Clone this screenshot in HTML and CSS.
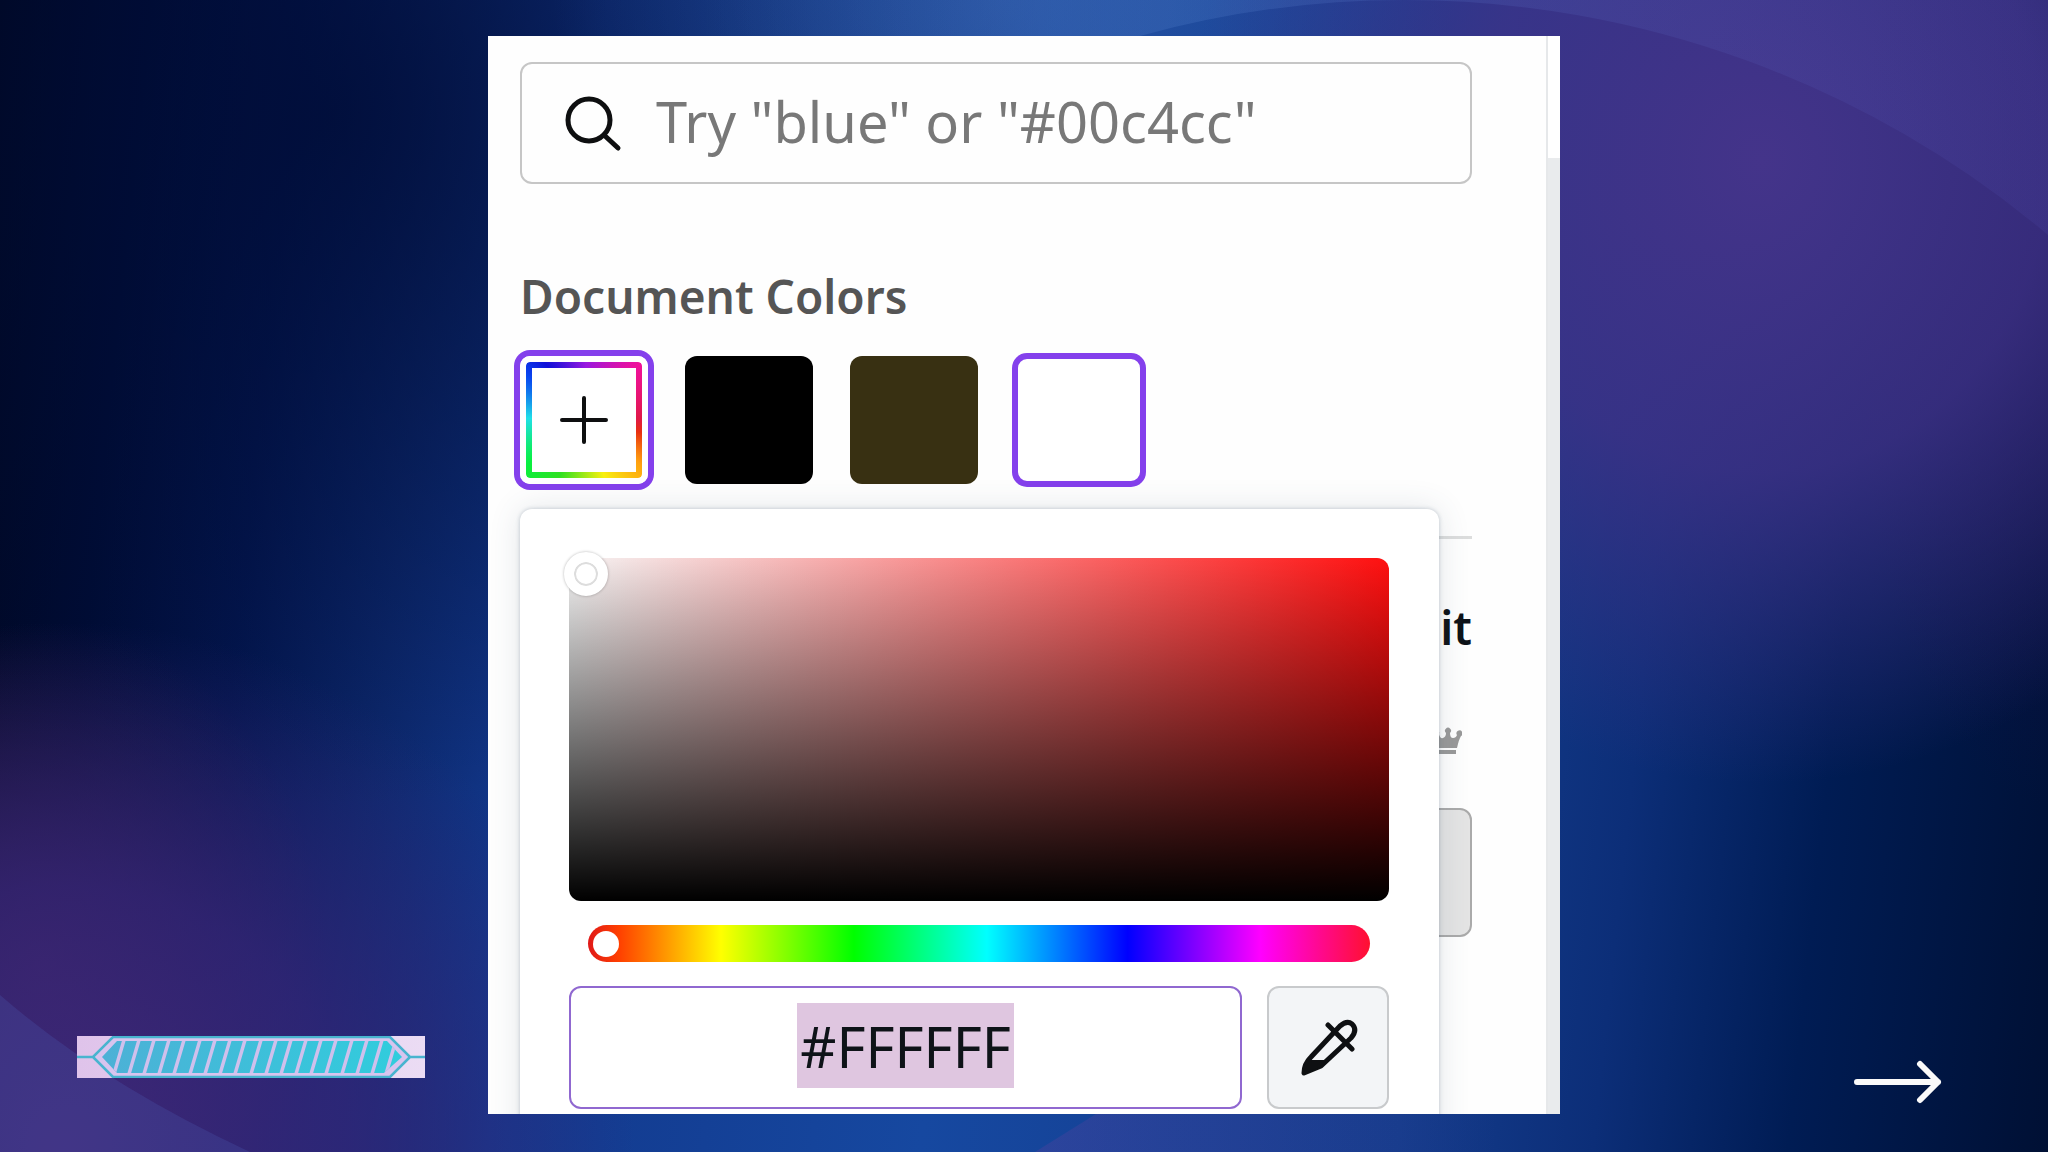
FILE: index.html
```html
<!DOCTYPE html>
<html lang="en">
<head>
<meta charset="utf-8">
<title>Color picker</title>
<link rel="stylesheet" href="styles.css">
</head>
<body>
<svg class="backdrop" viewBox="0 0 2048 1152" preserveAspectRatio="none" aria-hidden="true">
  <defs>
    <linearGradient id="glow" x1="0" x2="1"><stop offset="0" stop-color="#6aa0e0" stop-opacity="0"/><stop offset="0.35" stop-color="#6a98e0" stop-opacity="0.18"/><stop offset="1" stop-color="#5a58c0" stop-opacity="0.12"/></linearGradient>
    <linearGradient id="ember" x1="0" x2="1"><stop offset="0" stop-color="#7040a0" stop-opacity="0.25"/><stop offset="1" stop-color="#7040a0" stop-opacity="0"/></linearGradient>
  </defs>
  <path d="M700 0H2048V235A1000 1000 0 0 0 1404 0Q1270 0 1140 36H700Z" fill="url(#glow)"/>
  <path d="M0 995Q100 1082 250 1152H0Z" fill="#4a58b0" fill-opacity="0.28"/>
  <path d="M1096 1114H1500V1152H1035Z" fill="url(#ember)"/>
</svg>
<main class="slide">
  <div class="side side-left">
    <svg class="meter" viewBox="0 0 348 42" aria-hidden="true">
      <defs>
        <linearGradient id="plate" x1="0" x2="1"><stop offset="0" stop-color="#dfc3ea"/><stop offset="1" stop-color="#ebdcf4"/></linearGradient>
        <linearGradient id="fill" x1="0" x2="1"><stop offset="0" stop-color="#4db0d6"/><stop offset="1" stop-color="#30cddd"/></linearGradient>
        <clipPath id="hex"><path d="M40 5H310L325 21 307 37H40L25 21Z"/></clipPath>
      </defs>
      <rect width="348" height="42" fill="url(#plate)"/>
      <path d="M36 0H313L333 21 313 42H36L16 21Z" fill="#d8c4ee"/>
      <path d="M0 21H16L36 1H313L333 21H348M16 21L36 41H313L333 21" fill="none" stroke="#48b4cf" stroke-width="2.500"/>
      <g clip-path="url(#hex)">
        <rect x="20" width="310" height="42" fill="url(#fill)"/>
        <path d="M37 38L47 4M52 38L62 4M67 38L77 4M82 38L92 4M97 38L107 4M113 38L123 4M128 38L138 4M143 38L153 4M158 38L168 4M174 38L184 4M189 38L199 4M204 38L214 4M219 38L229 4M234 38L244 4M249 38L259 4M265 38L275 4M280 38L290 4M295 38L305 4M309 38L319 4" stroke="#cfc0ec" stroke-width="3.500"/>
      </g>
    </svg>
  </div>

  <section class="panel">
    <div class="content">
      <label class="search">
        <svg class="search-icon" viewBox="0 0 60 60" aria-hidden="true"><circle cx="25" cy="27" r="21"/><path d="M40 42L54 55"/></svg>
        <input class="search-input" type="text" aria-label="Search colors" placeholder="Try &quot;blue&quot; or &quot;#00c4cc&quot;">
      </label>

      <h2 class="heading">Document Colors</h2>
      <div class="swatches">
        <button class="swatch swatch-add" aria-label="Add a new color">
          <svg class="plus" viewBox="0 0 48 48" aria-hidden="true"><path d="M24 2V46M2 24H46"/></svg>
        </button>
        <button class="swatch swatch-black" aria-label="Black"></button>
        <button class="swatch swatch-olive" aria-label="Olive"></button>
        <button class="swatch swatch-white" aria-label="White"></button>
      </div>

      <div class="brand">
        <span class="brand-link">it</span>
        <svg class="crown" viewBox="0 0 40 28" aria-hidden="true"><path d="M17 21L12 8A3 3 0 1 1 17 7Q18 12 21 11 24 10 24 6A3 3 0 1 1 28 6Q28 11 31 11 34 11 35 8A3 3 0 1 1 39 9Q37 12 35 21ZM17 23H34V27H17Z"/></svg>
        <button class="brand-swatch" aria-label="Brand color"></button>
      </div>

      <div class="picker">
        <div class="shade"><span class="shade-handle"></span></div>
        <input class="hue" type="range" min="0" max="360" value="0" aria-label="Hue">
        <div class="hex-row">
          <label class="hex-field"><input class="hex-input" type="text" value="#FFFFFF" size="7" aria-label="Hex code"></label>
          <button class="dropper" aria-label="Pick a color from the page">
            <svg class="dropper-icon" viewBox="0 0 60 60" aria-hidden="true"><path d="M13 39L42 8Q49 2 54 6 60 12 53 20L23 48 6 55Q6 46 13 39ZM30 7L54 31"/><path class="ink" d="M12 42H28L22 49 5 56Z"/></svg>
          </button>
        </div>
      </div>
    </div>
    <div class="scroll-track"><div class="scroll-thumb"></div></div>
  </section>

  <div class="side side-right">
    <button class="next" aria-label="Next">
      <svg class="next-icon" viewBox="0 0 88 44" aria-hidden="true"><path d="M3 22H84M66 4L84 22 66 40"/></svg>
    </button>
  </div>
</main>
</body>
</html>
```
FILE: styles.css
```css
* { box-sizing: border-box; }

body {
  margin: 0;
  font-family: "Noto Sans", "Open Sans", sans-serif;
  color: #0e1318;
  background:
    radial-gradient(ellipse 28% 46% at 3% 100%, rgba(66, 42, 126, 0.9), rgba(54, 38, 122, 0.75) 50%, transparent),
    radial-gradient(ellipse 14% 30% at 2% 84%, rgba(72, 34, 78, 0.7), transparent),
    radial-gradient(ellipse 28% 54% at 86% 14%, rgba(68, 52, 138, 1), rgba(64, 50, 136, 0.8) 50%, transparent),
    radial-gradient(ellipse 10% 50% at 100% 20%, rgba(28, 16, 80, 0.6), transparent),
    radial-gradient(ellipse 22% 28% at 49% 0%, rgba(50, 90, 165, 0.6), transparent),
    radial-gradient(ellipse 36% 60% at 16% 10%, rgba(0, 12, 54, 0.8), transparent),
    linear-gradient(96deg, #000720 0%, #000c34 7%, #03164e 14%, #0c286c 21%, #12388c 28%, #1648a0 48%, #143c8c 70%, #0c2e78 79%, #001c54 88%, #001034 100%);
}

button { padding: 0; font: inherit; cursor: pointer; }
input { font: inherit; color: inherit; }

.backdrop {
  position: absolute;
  inset: 0;
  width: 100%;
  height: 100%;
}

.slide {
  position: relative;
  display: grid;
  grid-template-columns: 1fr minmax(0, 1072px) 1fr;
  min-height: 100vh;
  padding: 36px 0 38px;
}

.side { display: flex; align-items: flex-end; padding-bottom: 36px; }
.side-left { padding-left: 77px; }
.side-right { justify-content: flex-end; padding: 0 106px 10px 0; }
.meter { width: 348px; height: 42px; }
.next { border: 0; background: none; display: flex; }
.next-icon { width: 88px; height: 44px; fill: none; stroke: #fafafa; stroke-width: 6; stroke-linecap: round; stroke-linejoin: round; }

.panel {
  display: flex;
  height: calc(100vh - 74px);
  overflow: hidden;
  background: #fefefe;
}

.content { position: relative; flex: 1; min-width: 0; padding: 26px 74px 0 32px; }

.search {
  display: flex;
  align-items: center;
  gap: 32px;
  height: 122px;
  padding: 0 40px 0 42px;
  border: 2px solid #c6c6c6;
  border-radius: 12px;
}
.search-icon { flex: none; width: 60px; height: 60px; fill: none; stroke: #0e0f10; stroke-width: 5; stroke-linecap: round; }
.search-input { flex: 1; min-width: 0; margin-bottom: 4px; padding: 0; border: 0; outline: 0; background: none; font-size: 56px; }
.search-input::placeholder { color: #787878; opacity: 1; }

.heading { margin: 80px 0 0; font-size: 46px; line-height: 64px; font-weight: 600; color: #555; }

.swatches { display: flex; gap: 37px; margin-top: 28px; }
.swatch { width: 128px; height: 128px; border: 0; border-radius: 12px; }
.swatch-add {
  display: grid;
  place-items: center;
  border: 6px solid #fff;
  border-radius: 10px;
  box-shadow: 0 0 0 6px #8440ec;
  background:
    linear-gradient(#fff, #fff) center / 104px 104px no-repeat,
    conic-gradient(from 45deg, #f0109a, #e01848 12%, #e83010 16%, #ffa010 23%, #f8f010 32%, #30e020 44%, #08f040 52%, #20e0e8 63%, #0848f0 73%, #1010d8 78%, #9818e0 88%, #f0109a) padding-box;
}
.plus { width: 48px; height: 48px; fill: none; stroke: #0e0f10; stroke-width: 4; stroke-linecap: round; }
.swatch-black { background: #000; }
.swatch-olive { background: #383012; }
.swatch-white { background: #fff; border: 3px solid #8440ec; box-shadow: 0 0 0 3px #8440ec; }

.brand {
  display: flex;
  flex-direction: column;
  align-items: flex-end;
  margin-top: 52px;
  border-top: 3px solid #dcdddd;
}
.brand-link { margin-top: 56px; font-size: 46px; line-height: 64px; font-weight: 600; }
.crown { width: 40px; height: 28px; margin: 68px 10px 0 0; fill: #999; }
.brand-swatch { width: 128px; height: 129px; margin-top: 53px; border: 2px solid #aaa; border-radius: 12px; background: #e4e4e4; }

/* the colour picker floats over the list of colours */
.picker {
  position: absolute;
  top: 473px;
  left: 32px;
  right: 107px;
  display: flex;
  flex-direction: column;
  padding: 49px 50px 40px 49px;
  border-radius: 12px;
  background: #fff;
  box-shadow: 0 0 4px rgba(64, 87, 109, 0.3), 0 0 32px rgba(64, 87, 109, 0.14);
}
.shade {
  position: relative;
  height: 343px;
  border-radius: 12px;
  background: linear-gradient(to top, #000, transparent), linear-gradient(to right, #f4f4f4, #ff1010);
}
.shade-handle {
  position: absolute;
  top: -6px;
  left: -5px;
  width: 44px;
  height: 44px;
  border: 10px solid #fff;
  border-radius: 50%;
  background: #fff;
  box-shadow: 0 0 3px rgba(0, 0, 0, 0.3), inset 0 0 0 2px #ddd;
}
.hue {
  appearance: none;
  height: 37px;
  margin: 24px 19px;
  padding: 0 5px;
  border-radius: 20px;
  background: linear-gradient(to right, #e01818, #ff4000 4%, #ff0 17%, #0f0 34%, #0ff 51%, #00f 69%, #f0f 86%, #ff1030);
}
.hue::-webkit-slider-thumb { appearance: none; width: 26px; height: 26px; border-radius: 50%; background: #fff; }

.hex-row { display: grid; grid-template-columns: 1fr 122px; gap: 25px; height: 123px; }
.hex-field {
  display: flex;
  align-items: center;
  justify-content: center;
  border: 2px solid #9068d0;
  border-radius: 12px;
}
.hex-input {
  field-sizing: content;
  height: 85px;
  margin-bottom: 4px;
  padding: 0 3px;
  border: 0;
  outline: 0;
  background: #dfc6e0;
  font-size: 56px;
  text-align: center;
}
.dropper { display: grid; place-items: center; border: 2px solid #c8cacc; border-radius: 12px; background: #f3f5f7; }
.dropper-icon { width: 60px; height: 60px; fill: none; stroke: #0e1012; stroke-width: 5; stroke-linecap: round; stroke-linejoin: round; }
.ink { fill: #0e1012; stroke: none; }

.scroll-track { flex: none; width: 14px; border-left: 2px solid #e6e8ea; background: #e9ebed; }
.scroll-thumb { height: 122px; background: #fff; }
```
